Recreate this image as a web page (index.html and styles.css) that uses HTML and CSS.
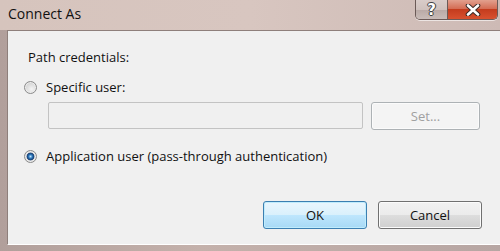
FILE: index.html
```html
<!DOCTYPE html>
<html lang="en">
<head>
    <meta charset="UTF-8">
    <meta name="viewport" content="width=device-width, initial-scale=1.0">
    <title>Connect As</title>
    <link rel="stylesheet" href="styles.css">
</head>
<body>
    <!-- Dialog window with its frame -->
    <div class="window">
        <div class="titlebar">
            <div class="caption">Connect As</div>
            <div class="caption-buttons">
                <div class="cap-btn help">?</div>
                <div class="cap-btn close">
                    <svg width="16" height="12" viewBox="0 0 16 12">
                        <path d="M3 1.5 L13 10.5 M13 1.5 L3 10.5" stroke="#3a2a26" stroke-width="4.6" stroke-linecap="round"/>
                        <path d="M3 1.5 L13 10.5 M13 1.5 L3 10.5" stroke="#fff" stroke-width="2.6" stroke-linecap="round"/>
                    </svg>
                </div>
            </div>
        </div>

        <!-- Client area -->
        <div class="client">
            <div class="label">Path credentials:</div>

            <label class="option">
                <span class="radio"></span>
                <span>Specific user:</span>
            </label>

            <div class="user-row">
                <div class="textbox"></div>
                <button class="btn disabled">Set...</button>
            </div>

            <label class="option app">
                <span class="radio checked"></span>
                <span>Application user (pass-through authentication)</span>
            </label>

            <div class="actions">
                <button class="btn default">OK</button>
                <button class="btn">Cancel</button>
            </div>
        </div>
    </div>
</body>
</html>
```

FILE: styles.css
```css
/* Base page setup */
html, body {
    margin: 0;
    padding: 0;
    width: 500px;
    height: 251px;
    overflow: hidden;
    font-family: 'Open Sans', 'Noto Sans', sans-serif;
    font-size: 13px;
    color: #111;
}

/* Aero-style window frame */
.window {
    width: 500px;
    height: 251px;
    display: flex;
    flex-direction: column;
    background: linear-gradient(90deg, #b19f9b, #c4b1ab 40%, #b7a6a3);
}

.titlebar {
    height: 30px;
    display: flex;
    justify-content: space-between;
    align-items: flex-start;
    background: linear-gradient(90deg, #d6c4bd, #d8c6c0 50%, #cdbab5);
}

.caption {
    padding: 4px 0 0 8px;
    font-size: 14px;
    color: #111;
}

/* Help and close buttons */
.caption-buttons {
    display: flex;
    margin-right: 2px;
    border: 1px solid #6b5a57;
    border-top: none;
    border-radius: 0 0 5px 5px;
    overflow: hidden;
    box-shadow: 0 1px 0 rgba(255, 255, 255, 0.6);
}

.cap-btn {
    height: 19px;
    display: flex;
    align-items: center;
    justify-content: center;
}

.help {
    width: 31px;
    background: linear-gradient(#d9ccc9, #cfc1bd 50%, #b9a9a5 51%, #c9bcb8);
    border-right: 1px solid #6b5a57;
    color: #fff;
    font-family: 'DejaVu Sans', sans-serif;
    font-weight: bold;
    font-size: 15px;
    text-shadow: 0 0 1px #333, 1px 0 0 #444, -1px 0 0 #444, 0 1px 0 #444, 0 -1px 0 #444;
}

.close {
    width: 49px;
    background: linear-gradient(#e2a08e, #d46d55 45%, #c43c1e 50%, #d8512f);
}

/* Dialog client area */
.client {
    flex: 1;
    margin: 0 0 6px 7px;
    background: #f0f0f0;
    border-top: 1px solid #8e7f7b;
    border-left: 1px solid #8e7f7b;
    border-bottom: 1px solid #fff;
    display: flex;
    flex-direction: column;
    padding: 0 18px 0 16px;
}

.label {
    margin: 17px 0 0 4px;
    line-height: 18px;
}

.option {
    display: flex;
    align-items: center;
    gap: 9px;
    margin-top: 12px;
    line-height: 18px;
}

.option.app {
    margin-top: 17px;
}

/* Windows 7 style radio buttons */
.radio {
    width: 11px;
    height: 11px;
    border-radius: 50%;
    border: 1px solid #8b8b8b;
    background: radial-gradient(circle at 60% 65%, #f4f4f4, #d3d3d3 70%, #c8c8c8);
    box-shadow: inset 0 0 0 1px #ececec;
}

.radio.checked {
    background: radial-gradient(circle, #bfe4ff 0, #2a75b8 25%, #1b3f73 45%, #dfdfdf 55%, #cfcfcf);
}

.user-row {
    display: flex;
    gap: 8px;
    margin: 6px 0 0 24px;
}

.textbox {
    width: 313px;
    height: 25px;
    border: 1px solid #c3c3c3;
    border-radius: 2px;
    background: #f0f0f0;
}

/* Push buttons */
.btn {
    width: 104px;
    height: 28px;
    font-family: inherit;
    font-size: 13px;
    color: #111;
    border: 1px solid #707070;
    border-radius: 3px;
    background: linear-gradient(#f2f2f2, #ebebeb 50%, #dddddd 51%, #cfcfcf);
    box-shadow: inset 0 0 0 1px #fbfbfb;
    padding: 0;
}

.btn.disabled {
    width: 109px;
    color: #a0a0a0;
    border-color: #adb2b5;
    background: #f4f4f4;
}

.btn.default {
    border-color: #3c7fb1;
    background: linear-gradient(#eaf6fd, #d9f0fc 50%, #bee6fd 51%, #a7d9f5);
    box-shadow: inset 0 0 0 1px #c0ecfc;
}

.actions {
    display: flex;
    justify-content: flex-end;
    gap: 11px;
    margin-top: 36px;
}
```
